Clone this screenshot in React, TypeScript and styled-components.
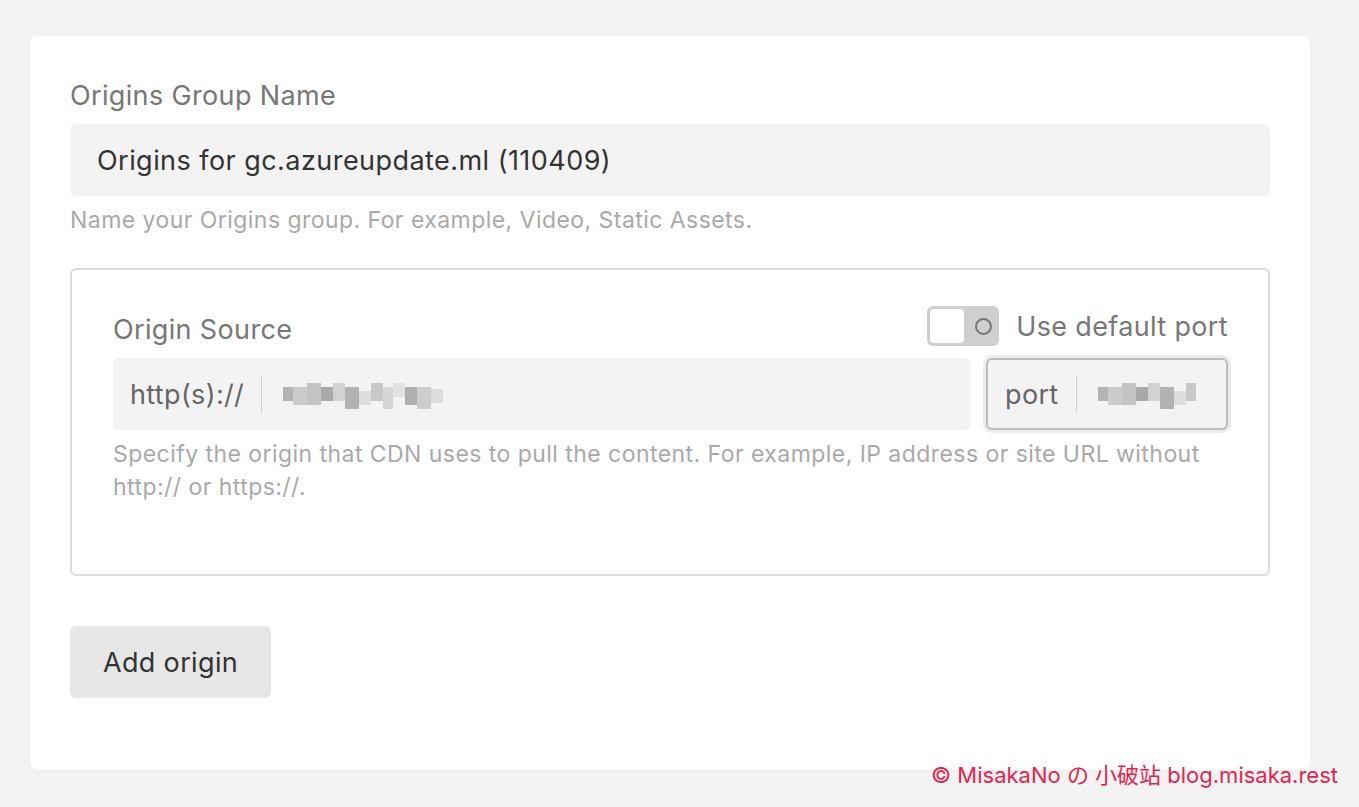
import React from 'react';
import styled, { createGlobalStyle } from 'styled-components';

const GlobalStyle = createGlobalStyle`
	html, body {
		margin: 0;
		padding: 0;
		background: #f4f3f4;
		font-family: Inter, "Noto Sans", "Noto Sans CJK SC", sans-serif;
	}
`;

const Page = styled.div`
	position: relative;
	width: 1359px;
	height: 807px;
	padding: 36px 49px 0 30px;
	box-sizing: border-box;
`;

const Card = styled.div`
	background: #fff;
	border-radius: 8px;
	padding: 44px 40px 72px 40px;
	box-shadow: 0 1px 2px rgba(0, 0, 0, 0.03);
`;

const Label = styled.div`
	font-size: 27px;
	letter-spacing: 0.35px;
	line-height: 32px;
	color: #777;
`;

const TextInput = styled.div`
	margin-top: 12px;
	height: 72px;
	border-radius: 6px;
	background: #f4f3f4;
	padding: 0 27px;
	display: flex;
	align-items: center;
	font-size: 27px;
	letter-spacing: 0.45px;
	color: #333;
`;

const Help = styled.div`
	margin-top: 8px;
	font-size: 23px;
	letter-spacing: 0.45px;
	line-height: 33px;
	color: #a9a9a9;
`;

const OriginBox = styled.div`
	margin-top: 31px;
	border: 2px solid #dcdcdc;
	border-radius: 6px;
	padding: 36px 40px 72px 41px;
	height: 308px;
	box-sizing: border-box;
`;

const HeaderRow = styled.div`
	display: flex;
	align-items: center;
	justify-content: space-between;
	height: 40px;
`;

const SourceLabel = styled(Label)`
	margin-top: 8px;
`;

const ToggleWrap = styled.div`
	display: flex;
	align-items: center;
	gap: 17px;
	font-size: 27px;
	letter-spacing: 0.35px;
	color: #777;
`;

const Toggle = styled.div`
	width: 72px;
	height: 40px;
	border-radius: 6px;
	background: #cfcfcf;
	display: flex;
	align-items: center;
	justify-content: space-between;
	padding: 0 7px 0 3px;
	box-sizing: border-box;
`;

const Knob = styled.div`
	width: 34px;
	height: 34px;
	border-radius: 4px;
	background: #fff;
`;

const OffMark = styled.div`
	width: 13px;
	height: 13px;
	border-radius: 50%;
	border: 2px solid #777;
`;

const InputRow = styled.div`
	margin-top: 12px;
	display: flex;
	gap: 15px;
`;

const Field = styled.div<{ $focused?: boolean; $width?: number }>`
	height: 72px;
	box-sizing: border-box;
	border-radius: 6px;
	background: #f4f3f4;
	display: flex;
	align-items: center;
	padding: 0 17px;
	font-size: 27px;
	letter-spacing: 0.35px;
	color: #666;
	flex: ${(p) => (p.$width ? `0 0 ${p.$width}px` : '1')};
	border: ${(p) => (p.$focused ? '2px solid #bcbcbc' : 'none')};
	box-shadow: ${(p) => (p.$focused ? '0 0 0 3px #ececec' : 'none')};
`;

const Divider = styled.div`
	width: 1px;
	height: 38px;
	background: #cfcfcf;
	margin: 0 21px 0 17px;
`;

const Button = styled.button`
	margin-top: 50px;
	width: 201px;
	height: 72px;
	border: none;
	border-radius: 6px;
	background: #e7e7e7;
	font-family: inherit;
	font-size: 27px;
	letter-spacing: 0.35px;
	color: #333;
	cursor: pointer;
`;

const Watermark = styled.div`
	position: absolute;
	right: 21px;
	top: 760px;
	font-size: 22px;
	line-height: 30px;
	color: #e0264f;
	font-family: Inter, "Noto Sans CJK SC", sans-serif;
`;

const blocks = [
	[0, 4, 10, '#b3b3b3'], [10, 4, 14, '#cccccc'], [24, 0, 14, '#c4c4c4'], [38, 4, 12, '#a9a9a9'],
	[50, 0, 12, '#d2d2d2'], [62, 4, 14, '#b2b2b2'], [76, 8, 12, '#dddddd'], [88, 0, 12, '#c8c8c8'],
	[100, 4, 10, '#d6d6d6'], [110, 0, 12, '#e2e2e2'], [122, 4, 12, '#afafaf'], [134, 4, 14, '#cdcdcd'],
	[148, 6, 12, '#dddddd'],
] as const;

const Blur = ({ width }: { width: number }) => (
	<svg width={width} height={30} viewBox={`0 0 ${width} 30`}>
		{blocks.filter((b) => b[0] < width).map(([x, y, w, c], i) => (
			<rect key={i} x={x} y={y + 4} width={w} height={14 + (i % 3) * 4} fill={c} />
		))}
	</svg>
);

export default function App() {
	return (
		<>
			<GlobalStyle />
			<Page>
				<Card>
					<Label>Origins Group Name</Label>
					<TextInput>Origins for gc.azureupdate.ml (110409)</TextInput>
					<Help>Name your Origins group. For example, Video, Static Assets.</Help>
					<OriginBox>
						<HeaderRow>
							<SourceLabel>Origin Source</SourceLabel>
							<ToggleWrap>
								<Toggle>
									<Knob />
									<OffMark />
								</Toggle>
								Use default port
							</ToggleWrap>
						</HeaderRow>
						<InputRow>
							<Field>
								http(s)://
								<Divider />
								<Blur width={162} />
							</Field>
							<Field $focused $width={242}>
								port
								<Divider />
								<Blur width={98} />
							</Field>
						</InputRow>
						<Help>
							Specify the origin that CDN uses to pull the content. For example, IP address or site URL without http:// or https://.
						</Help>
					</OriginBox>
					<Button>Add origin</Button>
				</Card>
				<Watermark>© MisakaNo の 小破站 blog.misaka.rest</Watermark>
			</Page>
		</>
	);
}
